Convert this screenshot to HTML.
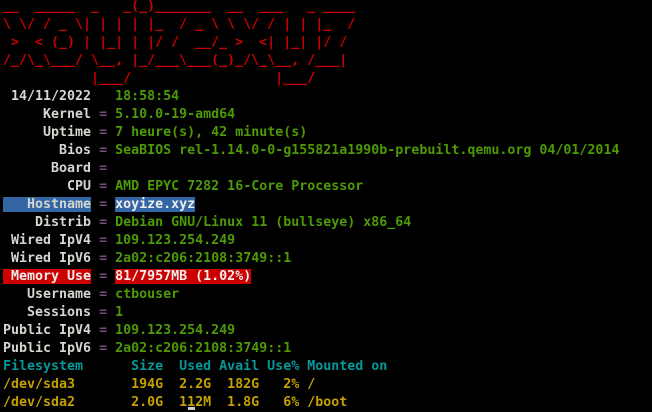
<!DOCTYPE html>
<html><head><meta charset="utf-8"><style>
html,body{margin:0;padding:0;background:#000;width:652px;height:411px;overflow:hidden}
pre{margin:0;position:absolute;left:3px;top:-2px;font-family:"DejaVu Sans Mono","Liberation Mono",monospace;font-size:13.3px;line-height:18px;color:#d3d7cf;font-weight:bold}
.r{color:#cc0000}.g{color:#4e9a06}.p{color:#75507b}.l{color:#d3d7cf}
.c{color:#06989a}.y{color:#c4a000}
.hb{background:#3465a4;color:#d3d7cf}.hv{background:#3465a4;color:#eee}
.rb{background:#cc0000;color:#eee}.rv{background:#cc0000;color:#eee}
.cur{position:absolute;left:188px;top:407px;width:7px;height:3px;background:#ccc}
</style></head><body>
<pre><span class="r">__  _____  _   _(_)_______  __  ___   _ ____
\ \/ / _ \| | | | |_  / _ \ \ \/ / | | |_  /
 &gt;  &lt; (_) | |_| | |/ /  __/_ &gt;  &lt;| |_| |/ / 
/_/\_\___/ \__, |_/___\___(_)_/\_\__, /___|
           |___/                  |___/     </span>
<span class="l"> 14/11/2022</span>   <span class="g">18:58:54</span>
<span class="l">     Kernel</span> <span class="p">=</span> <span class="g">5.10.0-19-amd64</span>
<span class="l">     Uptime</span> <span class="p">=</span> <span class="g">7 heure(s), 42 minute(s)</span>
<span class="l">       Bios</span> <span class="p">=</span> <span class="g">SeaBIOS rel-1.14.0-0-g155821a1990b-prebuilt.qemu.org 04/01/2014</span>
<span class="l">      Board</span> <span class="p">=</span> 
<span class="l">        CPU</span> <span class="p">=</span> <span class="g">AMD EPYC 7282 16-Core Processor</span>
<span class="hb">   Hostname</span> <span class="p">=</span> <span class="hv">xoyize.xyz</span>
<span class="l">    Distrib</span> <span class="p">=</span> <span class="g">Debian GNU/Linux 11 (bullseye) x86_64</span>
<span class="l"> Wired IpV4</span> <span class="p">=</span> <span class="g">109.123.254.249</span>
<span class="l"> Wired IpV6</span> <span class="p">=</span> <span class="g">2a02:c206:2108:3749::1</span>
<span class="rb"> Memory Use</span> <span class="p">=</span> <span class="rv">81/7957MB (1.02%)</span>
<span class="l">   Username</span> <span class="p">=</span> <span class="g">ctbouser</span>
<span class="l">   Sessions</span> <span class="p">=</span> <span class="g">1</span>
<span class="l">Public IpV4</span> <span class="p">=</span> <span class="g">109.123.254.249</span>
<span class="l">Public IpV6</span> <span class="p">=</span> <span class="g">2a02:c206:2108:3749::1</span>
<span class="c">Filesystem      Size  Used Avail Use% Mounted on</span>
<span class="y">/dev/sda3       194G  2.2G  182G   2% /</span>
<span class="y">/dev/sda2       2.0G  112M  1.8G   6% /boot</span></pre>
<div class="cur"></div>
</body></html>
